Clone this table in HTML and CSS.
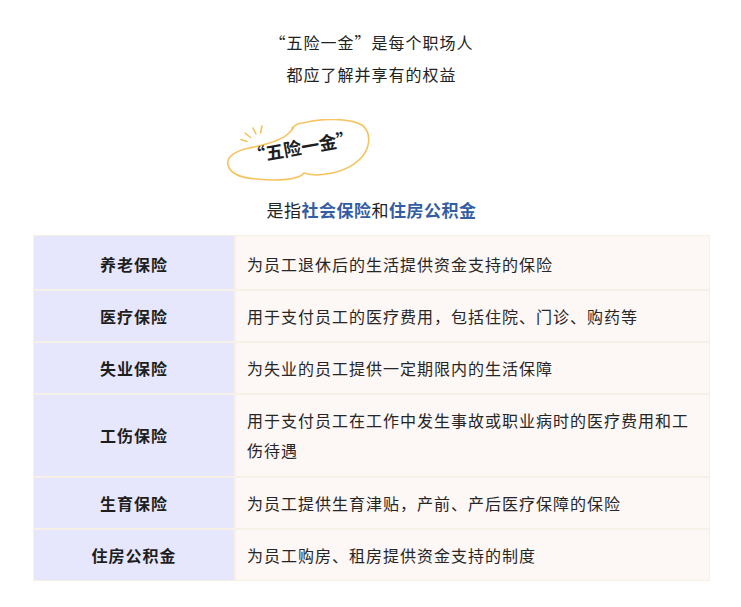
FILE: index.html
```html
<!DOCTYPE html>
<html lang="zh-CN">
<head>
<meta charset="utf-8">
<title>五险一金</title>
<link rel="stylesheet" href="styles.css">
</head>
<body>
<div class="page">
  <div class="intro">
    <p class="intro-line">“五险一金”是每个职场人</p>
    <p class="intro-line">都应了解并享有的权益</p>
  </div>
  <div class="badge">
    <svg class="badge-cloud" width="146" height="66" viewBox="0 0 146 66">
      <path d="M3 46 C1 38 10 32 24 29 C40 26 56 22 64 14 C68 10 70 7 67 9 C70 6 74 4 78 4 C96 -1 124 -1 137 6 C146 13 146 27 137 38 C127 49 110 55 92 56 C86 56 82 55 79 54 C74 61 52 62 32 60 C16 59 5 55 3 46 Z" fill="none" stroke="#f6c35c" stroke-width="1.6" stroke-linejoin="round"/>
      <g stroke="#f6c35c" stroke-width="1.6" stroke-linecap="round">
        <line x1="37" y1="7" x2="35.5" y2="14"/>
        <line x1="28" y1="9" x2="31" y2="15"/>
        <line x1="20" y1="14" x2="25.5" y2="18.5"/>
        <line x1="16" y1="20.5" x2="22" y2="22.5"/>
      </g>
    </svg>
    <span class="badge-text">“五险一金”</span>
  </div>
  <p class="subtitle">是指<span class="hl">社会保险</span>和<span class="hl">住房公积金</span></p>
  <table class="ins-table">
    <tbody>
      <tr class="row-first"><th>养老保险</th><td>为员工退休后的生活提供资金支持的保险</td></tr>
      <tr><th>医疗保险</th><td>用于支付员工的医疗费用，包括住院、门诊、购药等</td></tr>
      <tr><th>失业保险</th><td>为失业的员工提供一定期限内的生活保障</td></tr>
      <tr class="row-double"><th>工伤保险</th><td>用于支付员工在工作中发生事故或职业病时的医疗费用和工伤待遇</td></tr>
      <tr><th>生育保险</th><td>为员工提供生育津贴，产前、产后医疗保障的保险</td></tr>
      <tr><th>住房公积金</th><td>为员工购房、租房提供资金支持的制度</td></tr>
    </tbody>
  </table>
</div>
</body>
</html>
```

FILE: styles.css
```css
* { box-sizing: border-box; }
html, body { margin: 0; padding: 0; background: #ffffff; }
body {
  font-family: "Noto Sans CJK SC", "Noto Sans", "DejaVu Sans", sans-serif;
  color: #222222;
}
.page {
  width: 741px;
  padding: 26px 31px 0 33px;
}
.intro { display: flex; flex-direction: column; align-items: center; }
.intro-line {
  margin: 0;
  font-size: 16px;
  line-height: 32px;
  letter-spacing: 1px;
  color: #222;
}
.badge {
  position: relative;
  width: 146px;
  height: 66px;
  margin: 29px 0 0 192px;
}
.badge-cloud { display: block; }
.badge-text {
  position: absolute;
  left: 22px;
  top: 15px;
  font-size: 18px;
  font-weight: 700;
  line-height: 24px;
  color: #1e1e1e;
  transform: rotate(-10deg);
  white-space: nowrap;
}
.subtitle {
  margin: 10px 0 0;
  text-align: center;
  font-size: 17px;
  line-height: 30px;
  letter-spacing: 0.5px;
  color: #222;
}
.subtitle .hl { color: #345ea3; font-weight: 700; }
.ins-table {
  margin-top: 10px;
  width: 677px;
  border-collapse: separate;
  border-spacing: 0;
}
.ins-table th, .ins-table td {
  border: 1px solid #f6f0e6;
  padding: 10px 11px;
  font-size: 16px;
  line-height: 30px;
  letter-spacing: 1px;
  vertical-align: middle;
}
.ins-table .row-first th, .ins-table .row-first td {
  padding-top: 13px;
}
.ins-table .row-double th, .ins-table .row-double td {
  padding-bottom: 11px;
}
.ins-table th {
  width: 202px;
  background: #e6e7fd;
  font-weight: 700;
  text-align: center;
  color: #1e1e1e;
}
.ins-table td {
  background: #fdf7f6;
  text-align: left;
  color: #262626;
}
```
